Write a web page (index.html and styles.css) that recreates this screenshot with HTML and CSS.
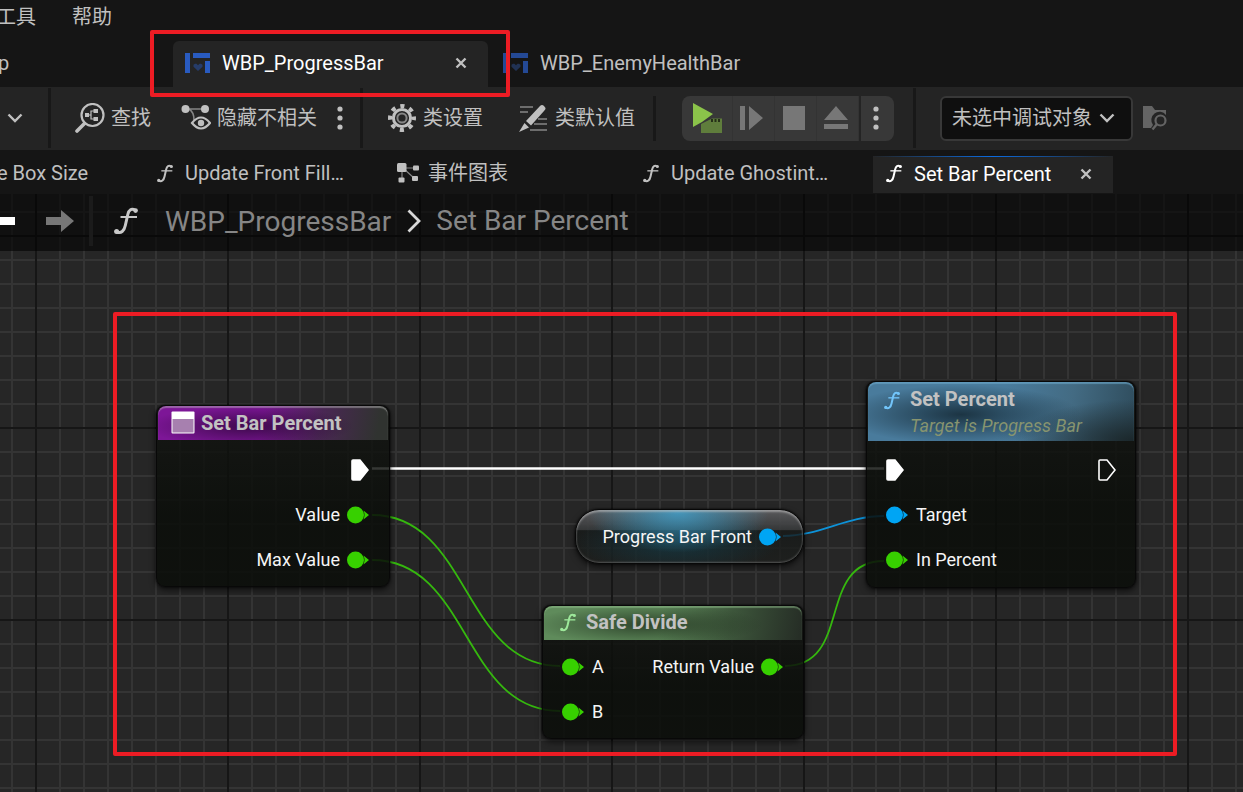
FILE: index.html
```html
<!DOCTYPE html>
<html lang="zh-CN">
<head>
<meta charset="utf-8">
<title>WBP_ProgressBar</title>
<link rel="stylesheet" href="styles.css">
</head>
<body>
<svg class="defs" aria-hidden="true">
  <symbol id="fn" viewBox="0 0 24 28">
    <path d="M21.500 3.500C17.500 .8 14.800 3 13.800 7.500L11.300 18.500C10.200 24 7 27 2.500 24.800" fill="none" stroke="currentColor" stroke-width="3"/>
    <path d="M6.500 10H23" stroke="currentColor" stroke-width="2"/>
    <circle cx="21.600" cy="3.600" r="2.300" fill="currentColor"/><circle cx="2.600" cy="24.400" r="2.500" fill="currentColor"/>
  </symbol>
  <symbol id="close" viewBox="0 0 12 12"><path d="M1.500 1.500L10.500 10.500M10.500 1.500L1.500 10.500" stroke="currentColor" stroke-width="2.400"/></symbol>
  <symbol id="widget" viewBox="0 0 25 20">
    <path d="M0 0H5V20H0ZM8 0H25V5H8ZM20 8H25V20H20Z" fill="#295bc0"/>
    <path d="M13 18L8.500 13.800V11.800L10 10.800H11.500L13 12.300L14.500 10.800H16L17.500 11.800V13.800Z" fill="#263c69"/>
  </symbol>
  <symbol id="pin" viewBox="0 0 22 18"><circle cx="8.500" cy="9" r="8.500" fill="currentColor"/><path d="M16.500 4.500L22 9L16.500 13.500Q18.500 9 16.500 4.500Z" fill="currentColor"/></symbol>
  <symbol id="exec" viewBox="0 0 18 22"><path d="M1 2Q1 1 2 1H9L17 11L9 21H2Q1 21 1 20Z" fill="currentColor" stroke="#fff" stroke-width="1.600"/></symbol>
  <symbol id="chevron" viewBox="0 0 16 10"><path d="M1.500 1.500L8 8L14.500 1.500" fill="none" stroke="currentColor" stroke-width="2.400"/></symbol>
  <symbol id="dots" viewBox="0 0 6 24"><circle cx="3" cy="3" r="2.600" fill="currentColor"/><circle cx="3" cy="12" r="2.600" fill="currentColor"/><circle cx="3" cy="21" r="2.600" fill="currentColor"/></symbol>
</svg>

<header class="top">
  <nav class="menu"><button>工具</button><button>帮助</button></nav>
  <div class="asset-tabs">
    <button class="asset-first">p</button>
    <div class="asset-tab active">
      <svg class="i-widget"><use href="#widget"/></svg><span class="grow">WBP_ProgressBar</span>
      <button class="close" aria-label="关闭"><svg><use href="#close"/></svg></button>
    </div>
    <div class="asset-tab"><svg class="i-widget dim"><use href="#widget"/></svg><span>WBP_EnemyHealthBar</span></div>
    <div class="callout callout-tab"></div>
  </div>
</header>

<div class="toolbar">
  <button class="more" aria-label="更多"><svg class="i-chevron"><use href="#chevron"/></svg></button>
  <i class="sep"></i>
  <button class="tool find">
    <svg width="30" height="30" viewBox="0 0 30 30"><circle cx="17.500" cy="12" r="11" fill="none" stroke="currentColor" stroke-width="2.200"/><path d="M9.500 20.500L2 28" stroke="currentColor" stroke-width="3.600" stroke-linecap="round"/><path d="M10 10H14V14H10ZM18.500 6H23V10H18.500ZM18.500 14H23V18H18.500Z" fill="currentColor"/><path d="M19 8H16V16H19M14 12H16" fill="none" stroke="currentColor" stroke-width="1.200"/></svg>
    查找</button>
  <button class="tool hide">
    <svg width="30" height="28" viewBox="0 0 30 28"><path d="M4 5H24M8 5Q13 8 13 16" fill="none" stroke="#858585" stroke-width="1.600"/><circle cx="4.500" cy="5" r="4" fill="currentColor"/><circle cx="24" cy="5" r="4" fill="currentColor"/><path d="M11 19Q20 8 29 19Q20 30 11 19Z" fill="#242424" stroke="currentColor" stroke-width="2.200"/><circle cx="20" cy="19" r="3.200" fill="currentColor"/></svg>
    隐藏不相关</button>
  <button class="tool-dots" aria-label="选项"><svg class="i-dots"><use href="#dots"/></svg></button>
  <i class="sep"></i>
  <button class="tool settings">
    <svg width="28" height="28" viewBox="0 0 28 28" fill="none" stroke="currentColor"><circle cx="14" cy="14" r="12" stroke-width="4" stroke-dasharray="4.200 5.225" stroke-dashoffset="2.100"/><circle cx="14" cy="14" r="8.600" stroke-width="3"/><circle cx="14" cy="14" r="4.600" stroke="#858585" stroke-width="2"/></svg>
    类设置</button>
  <button class="tool defaults">
    <svg width="30" height="28" viewBox="0 0 30 28"><path d="M2 3H15M2 8H10M20 15H29M16 20H29M12 26H29" stroke="#858585" stroke-width="1.600"/><path d="M8 17L22 2Q24 0 26 2L27.500 4Q28 5 26 7L13 21.500ZM6.500 19L11 23.500L1 28Z" fill="currentColor"/></svg>
    类默认值</button>
  <i class="sep short"></i>
  <div class="play-group">
    <button class="play" aria-label="运行"><svg width="30" height="30" viewBox="0 0 30 30"><path d="M1 0L21 11L10 19L1 24Z" fill="#8bc34a"/><path d="M9 21L20 15.500H30V30H9Z" fill="#5f7d3c"/><path d="M19 17.500H29" stroke="#263018" stroke-width="3" stroke-dasharray="2 1.500"/></svg></button>
    <button aria-label="单步"><svg width="24" height="24" viewBox="0 0 24 24"><path d="M0 0H5V24H0ZM9 0L23 12L9 24Z" fill="#777"/></svg></button>
    <button aria-label="停止"><svg width="22" height="24" viewBox="0 0 22 24"><path d="M0 0H22V24H0Z" fill="#777"/></svg></button>
    <button aria-label="弹出"><svg width="24" height="24" viewBox="0 0 24 24"><path d="M12 0L24 14H0ZM0 18H24V23H0Z" fill="#777"/></svg></button>
    <button class="play-more" aria-label="运行选项"><svg class="i-dots"><use href="#dots"/></svg></button>
  </div>
  <i class="sep"></i>
  <label class="debug"><select aria-label="调试对象"><option>未选中调试对象</option></select><svg class="i-chevron"><use href="#chevron"/></svg></label>
  <button class="browse" aria-label="浏览"><svg width="25" height="26" viewBox="0 0 25 26"><path d="M0 1H9L12 5H23V10A8 8 0 0 0 10 20L8 23H0Z" fill="#646464"/><circle cx="17.500" cy="15.500" r="5" fill="none" stroke="#646464" stroke-width="2.200"/><path d="M14 19L9.500 24.500" stroke="#646464" stroke-width="2.400"/></svg></button>
</div>

<nav class="graph-tabs">
  <div class="graph-first">e Box Size</div>
  <div class="graph-tab"><span class="slot"><svg class="i-fn"><use href="#fn"/></svg></span><span>Update Front Fill…</span></div>
  <div class="graph-tab"><span class="slot"><svg width="22" height="20" viewBox="0 0 22 20"><path d="M5 5H18M5 5V16M7 6L17 15" stroke="#858585" stroke-width="1.200"/><g fill="currentColor"><rect width="9.500" height="9" rx="1.500"/><rect x="16" y="2.500" width="6" height="5" rx="1"/><rect x="1.500" y="14.500" width="6" height="5" rx="1"/><rect x="15" y="13" width="6" height="5" rx="1"/></g></svg></span><span>事件图表</span></div>
  <div class="graph-tab"><span class="slot"><svg class="i-fn"><use href="#fn"/></svg></span><span>Update Ghostint…</span></div>
  <div class="graph-tab active"><span class="slot"><svg class="i-fn"><use href="#fn"/></svg></span><span class="grow">Set Bar Percent</span><button class="close" aria-label="关闭"><svg><use href="#close"/></svg></button></div>
</nav>

<main class="graph">
  <div class="crumbs">
    <button class="back" aria-label="后退"><svg width="16" height="24" viewBox="0 0 16 24"><path d="M0 8H15V16H0Z" fill="#fff"/></svg></button>
    <button class="forward" aria-label="前进"><svg width="28" height="24" viewBox="0 0 28 24"><path d="M0 8H15V1L28 12L15 23V16H0Z" fill="#777"/></svg></button>
    <i class="crumb-sep"></i>
    <svg class="i-fn-big"><use href="#fn"/></svg>
    <span class="crumb-parent">WBP_ProgressBar</span>
    <svg class="crumb-arrow" viewBox="0 0 14 24"><path d="M1.500 1.500L12 12L1.500 22.500" fill="none" stroke="#d8d8d8" stroke-width="2.800"/></svg>
    <span class="crumb-current">Set Bar Percent</span>
  </div>

  <svg class="wires" fill="none" stroke-width="1.800">
    <path d="M372 274.500H884" stroke="#fff" stroke-width="2.600"/>
    <path d="M372 321C470 321 462 472 560 472" stroke="#35b80e"/>
    <path d="M372 366C470 366 462 517 560 517" stroke="#35b80e"/>
    <path d="M785 472C853 472 816 367 884 367" stroke="#35b80e"/>
    <path d="M783 342C820 342 846 322 884 322" stroke="#0d92d8"/>
  </svg>

  <section class="node entry">
    <h2><svg class="i-event" viewBox="0 0 24 23"><rect x=".5" y=".5" width="23" height="22" rx="1" fill="#fff"/><path d="M1.500 8H22.500V21.500H1.500Z" fill="#a780af"/></svg>Set Bar Percent</h2>
    <div class="pins">
      <div class="row out"><svg class="exec"><use href="#exec"/></svg></div>
      <div class="row out">Value<svg class="pin green"><use href="#pin"/></svg></div>
      <div class="row out">Max Value<svg class="pin green"><use href="#pin"/></svg></div>
    </div>
  </section>

  <section class="node setter">
    <h2><svg class="i-fn"><use href="#fn"/></svg><span>Set Percent<small>Target is Progress Bar</small></span></h2>
    <div class="pins">
      <div class="row both"><svg class="exec"><use href="#exec"/></svg><svg class="exec hollow"><use href="#exec"/></svg></div>
      <div class="row"><svg class="pin blue"><use href="#pin"/></svg>Target</div>
      <div class="row"><svg class="pin green"><use href="#pin"/></svg>In Percent</div>
    </div>
  </section>

  <section class="node variable">Progress Bar Front<svg class="pin blue"><use href="#pin"/></svg></section>

  <section class="node divide">
    <h2><svg class="i-fn"><use href="#fn"/></svg>Safe Divide</h2>
    <div class="pins">
      <div class="row both"><span class="row"><svg class="pin green"><use href="#pin"/></svg>A</span><span class="row out">Return Value<svg class="pin green"><use href="#pin"/></svg></span></div>
      <div class="row"><svg class="pin green"><use href="#pin"/></svg>B</div>
    </div>
  </section>

  <div class="callout callout-graph"></div>
</main>
</body>
</html>
```
FILE: styles.css
```css
* { box-sizing: border-box; }
body {
  margin: 0;
  min-height: 100vh;
  display: flex;
  flex-direction: column;
  overflow: hidden;
  background: #151515;
  color: #c0c0c0;
  font: 20px/24px Roboto, "Noto Sans CJK SC", sans-serif;
  white-space: nowrap;
}
svg { display: block; flex: none; }
button { border: 0; padding: 0; background: none; color: inherit; font: inherit; }
.defs { position: absolute; width: 0; height: 0; }
.grow { flex: 1; }
.i-fn { width: 16px; height: 19px; }
.i-chevron { width: 16px; height: 10px; }
.i-dots { width: 6px; height: 24px; }
.close svg { width: 12px; height: 12px; }

.menu { display: flex; gap: 36px; height: 41px; padding-top: 5px; align-items: flex-start; }
.menu button:first-child { margin-left: -4px; }
.asset-tabs { position: relative; display: flex; gap: 3px; }
.asset-first { width: 172px; margin-left: -2px; padding-bottom: 2px; text-align: left; flex: none; }
.asset-tab { display: flex; align-items: center; gap: 12px; width: 315px; height: 46px; padding: 0 21px 2px 12px; }
.asset-tab.active { background: #242424; border-radius: 6px 6px 0 0; color: #fff; }
.asset-tab .close { color: #c0c0c0; }
.i-widget { width: 25px; height: 20px; }
.i-widget.dim { opacity: .75; }

.callout { position: absolute; z-index: 5; border: 4px solid #ed1c24; border-radius: 2px; pointer-events: none; }
.callout-tab { left: 150px; top: -11px; width: 360px; height: 67px; }
.callout-graph { left: 113px; top: 118px; width: 1064px; height: 444px; }

.toolbar { display: flex; align-items: center; height: 63px; padding-bottom: 1px; background: #242424; }
.sep { flex: none; width: 3px; height: 60px; background: #181818; }
.sep.short { height: 45px; }
.more { width: 48px; padding-left: 7px; }
.tool { display: flex; align-items: center; gap: 6px; }
.find { margin-left: 24px; }
.hide { margin-left: 30px; }
.tool-dots { margin: 0 17px 0 20px; }
.settings { margin-left: 25px; gap: 7px; }
.defaults { margin: 0 18px 0 35px; gap: 7px; }
.play-group { display: flex; margin: 0 19px 0 26px; height: 45px; border-radius: 8px; overflow: hidden; background: #383838; }
.play-group button { display: grid; place-items: center; width: 42px; padding-right: 4px; border-right: 1px solid #333; }
.play-group .play { width: 51px; padding: 0; }
.play-group .play-more { width: 35px; border-right: 0; border-left: 2px solid #242424; }
.debug { display: grid; align-items: center; margin-left: 24px; }
.debug > * { grid-area: 1 / 1; }
.debug select { appearance: none; width: 193px; height: 45px; padding: 0 36px 0 10px; border: 2px solid #383838; border-radius: 6px; background: #0f0f0f; color: #c0c0c0; font: inherit; }
.debug svg { justify-self: end; margin-right: 18px; pointer-events: none; }
.browse { margin-left: 10px; }

.graph-tabs { display: flex; align-items: flex-end; gap: 3px; height: 44px; padding-bottom: 1px; }
.graph-first { flex: none; width: 144px; margin-left: -3px; height: 37px; line-height: 34px; }
.graph-tab { flex: none; display: flex; align-items: center; gap: 9px; width: 240px; height: 37px; padding: 0 21px 3px 10px; }
.graph-tab.active { border-top: 1px solid; border-image: linear-gradient(90deg, #242424, #0b6be0, #242424) 1; background: #242424; color: #fff; }
.graph-tab .close { color: #c0c0c0; }
.slot { display: grid; place-items: center; width: 22px; }

.graph {
  position: relative;
  flex: 1;
  overflow: hidden;
  background:
    repeating-linear-gradient(90deg, #161616 0 2px, transparent 2px 192px) 35px 0,
    repeating-linear-gradient(#161616 0 2px, transparent 2px 192px) 0 41px,
    repeating-linear-gradient(90deg, #343434 0 2px, transparent 2px 24px) 11px 0,
    repeating-linear-gradient(#343434 0 2px, transparent 2px 24px) 0 17px,
    #262626;
  background-size: 192px 192px, 192px 192px, 24px 24px, 24px 24px, auto;
}
.crumbs { display: flex; align-items: center; height: 57px; padding-bottom: 3px; background: rgba(0, 0, 0, .58); color: #868686; font-size: 28px; line-height: 32px; }
.forward { margin: 0 15px 0 30px; }
.crumb-sep { width: 4px; height: 50px; background: #1b1b1b; }
.i-fn-big { width: 24px; height: 28px; margin: 0 27px 0 21px; color: #c8c8c8; }
.crumb-parent { padding-top: 2px; }
.crumb-arrow { width: 14px; height: 24px; margin: 0 15px 0 16px; }

.wires { position: absolute; inset: 0; width: 100%; height: 100%; }
.node {
  position: absolute;
  border: 1px solid #080808;
  border-radius: 9px;
  background: linear-gradient(rgba(18, 20, 17, .8), rgba(10, 13, 9, .86) 60%);
  box-shadow: 0 3px 6px rgba(0, 0, 0, .6), 0 0 2px #000;
  color: #f5f5f5;
  font-size: 18px;
}
.node h2 {
  display: flex;
  align-items: center;
  gap: 6px;
  margin: 0 1px;
  height: 34px;
  padding-bottom: 1px;
  border-radius: 8px 8px 0 0;
  color: #c2c2c2;
  font-size: 20px;
  font-weight: 700;
}
.node small { display: block; color: #87946f; font-size: 18px; font-style: italic; font-weight: 400; line-height: 28px; }
.pins { padding: 6px 19px 5px; }
.row { display: flex; align-items: center; gap: 8px; height: 45px; }
.out { justify-content: flex-end; gap: 7px; }
.both { justify-content: space-between; }
.pin { width: 22px; height: 18px; }
.exec { width: 18px; height: 22px; color: #fff; }
.hollow { color: transparent; }
.green { color: #37d000; }
.blue { color: #00a5f4; }

.entry { left: 156px; top: 211px; width: 234px; }
.entry .pins { padding-top: 7px; padding-right: 20px; padding-bottom: 4px; }
.entry h2 { padding-left: 13px; box-shadow: inset 0 2px 1px rgba(190, 190, 190, .45); background: radial-gradient(ellipse 45% 60% at 40% 60%, rgba(40, 5, 50, .75), transparent), linear-gradient(100deg, #7d1697 0 45%, #4a2754 70%, #303330 95%); }
.i-event { width: 24px; height: 23px; }

.setter { left: 866px; top: 187px; width: 270px; }
.setter h2 { height: 59px; gap: 10px; padding-left: 16px; align-items: flex-start; line-height: 26px; box-shadow: inset 0 2px 1px rgba(110, 170, 205, .6); background: radial-gradient(ellipse 45% 50% at 35% 55%, rgba(20, 40, 52, .85), transparent), radial-gradient(ellipse 45% 70% at 100% 100%, rgba(25, 35, 37, .9), transparent), linear-gradient(100deg, #497b9c 0 50%, #436b83 75%, #2e4b5b); }
.setter h2 .i-fn { margin-top: 9px; color: #72c5fa; }
.setter h2 span { padding-top: 4px; }

.divide { left: 542px; top: 411px; width: 262px; }
.divide h2 { padding: 0 0 2px 16px; gap: 10px; box-shadow: inset 0 2px 1px rgba(145, 190, 140, .5); background: radial-gradient(ellipse 45% 60% at 40% 55%, rgba(30, 45, 28, .75), transparent), linear-gradient(100deg, #5f8b5b 0 45%, #3d563b 72%, #252c25); }
.divide h2 .i-fn { color: #9de89a; }
.divide .pins { padding: 4px 20px 4px 19px; }

.variable {
  left: 575px;
  top: 315px;
  width: 229px;
  height: 55px;
  display: flex;
  align-items: center;
  justify-content: flex-end;
  gap: 7px;
  padding-right: 22px;
  border-radius: 24px;
  background: radial-gradient(ellipse 40% 75% at 45% 5%, rgba(65, 165, 210, .8), transparent), radial-gradient(ellipse 45% 60% at 45% 60%, rgba(15, 75, 95, .5), transparent), linear-gradient(rgba(95, 95, 98, .9), rgba(55, 57, 58, .9) 37%, rgba(22, 25, 24, .8) 39%, rgba(28, 30, 28, .8));
  box-shadow: inset 0 2px 2px rgba(200, 200, 200, .55), inset 0 -1px 2px rgba(140, 140, 140, .5), 0 3px 6px rgba(0, 0, 0, .6), 0 0 2px #000;
}
```
